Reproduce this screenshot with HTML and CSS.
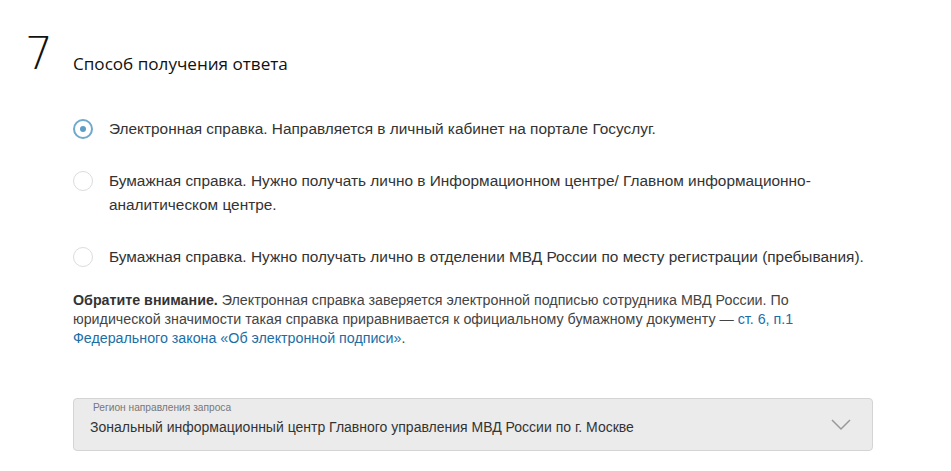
FILE: index.html
```html
<!DOCTYPE html>
<html lang="ru">
<head>
<meta charset="utf-8">
<link rel="stylesheet" href="styles.css">
</head>
<body>
<div class="step">
  <div class="step-num">7</div>
  <div class="step-body">
    <h2 class="title">Способ получения ответа</h2>
    <div class="options">
      <label class="opt">
        <span class="radio checked"></span>
        <span class="opt-text">Электронная справка. Направляется в личный кабинет на портале Госуслуг.</span>
      </label>
      <label class="opt">
        <span class="radio"></span>
        <span class="opt-text">Бумажная справка. Нужно получать лично в Информационном центре/ Главном информационно-<br>аналитическом центре.</span>
      </label>
      <label class="opt">
        <span class="radio"></span>
        <span class="opt-text">Бумажная справка. Нужно получать лично в отделении МВД России по месту регистрации (пребывания).</span>
      </label>
    </div>
    <p class="note"><b>Обратите внимание.</b> Электронная справка заверяется электронной подписью сотрудника МВД России. По<br>юридической значимости такая справка приравнивается к официальному бумажному документу — <a href="#">ст. 6, п.1<br>Федерального закона «Об электронной подписи»</a>.</p>
    <div class="select">
      <div class="select-label">Регион направления запроса</div>
      <div class="select-value">Зональный информационный центр Главного управления МВД России по г. Москве</div>
      <svg class="chev" width="20" height="12" viewBox="0 0 20 12"><path d="M1 1 L10 10 L19 1" fill="none" stroke="#999" stroke-width="1.5"/></svg>
    </div>
  </div>
</div>
</body>
</html>
```
FILE: styles.css
```css
html, body { margin: 0; padding: 0; background: #fff; }
body { font-family: "Liberation Sans", Arial, sans-serif; color: #333; }
.step { display: flex; padding: 32px 0 0 25px; }
.step-num { font-family: "DejaVu Sans", sans-serif; font-weight: 200; font-size: 44px; line-height: 44px; color: #111; width: 48px; }
.step-body { width: 800px; }
.title { margin: 21px 0 0; font-family: "Open Sans", sans-serif; font-weight: 400; font-size: 17.1px; line-height: 22px; color: #111; }
.options { display: flex; flex-direction: column; gap: 28px; margin-top: 42px; }
.opt { display: flex; align-items: flex-start; gap: 16px; font-size: 15.4px; line-height: 24px; color: #333; }
.radio { flex: none; width: 18px; height: 18px; border: 1px solid #dcdcdc; border-radius: 50%; margin-top: 2px; box-sizing: content-box; display: flex; align-items: center; justify-content: center; }
.radio.checked { width: 16px; height: 16px; border: 2px solid #6fa9cb; }
.radio.checked::after { content: ""; width: 6px; height: 6px; border-radius: 50%; background: #5d9ec6; }
.note { margin: 22px 0 0; font-size: 14.25px; line-height: 19px; color: #444; }
.note b { color: #333; }
.note a { color: #1a6ea6; text-decoration: none; }
.select { position: relative; margin-top: 50px; height: 53px; background: #ebebeb; border: 1px solid #d4d4d4; border-radius: 4px; box-sizing: border-box; padding: 3px 16px 0 16px; }
.select-label { font-size: 10.2px; line-height: 12px; color: #777; padding-left: 3px; }
.select-value { font-size: 14px; line-height: 18px; color: #333; margin-top: 4px; }
.chev { position: absolute; right: 21px; top: 20px; }
```
